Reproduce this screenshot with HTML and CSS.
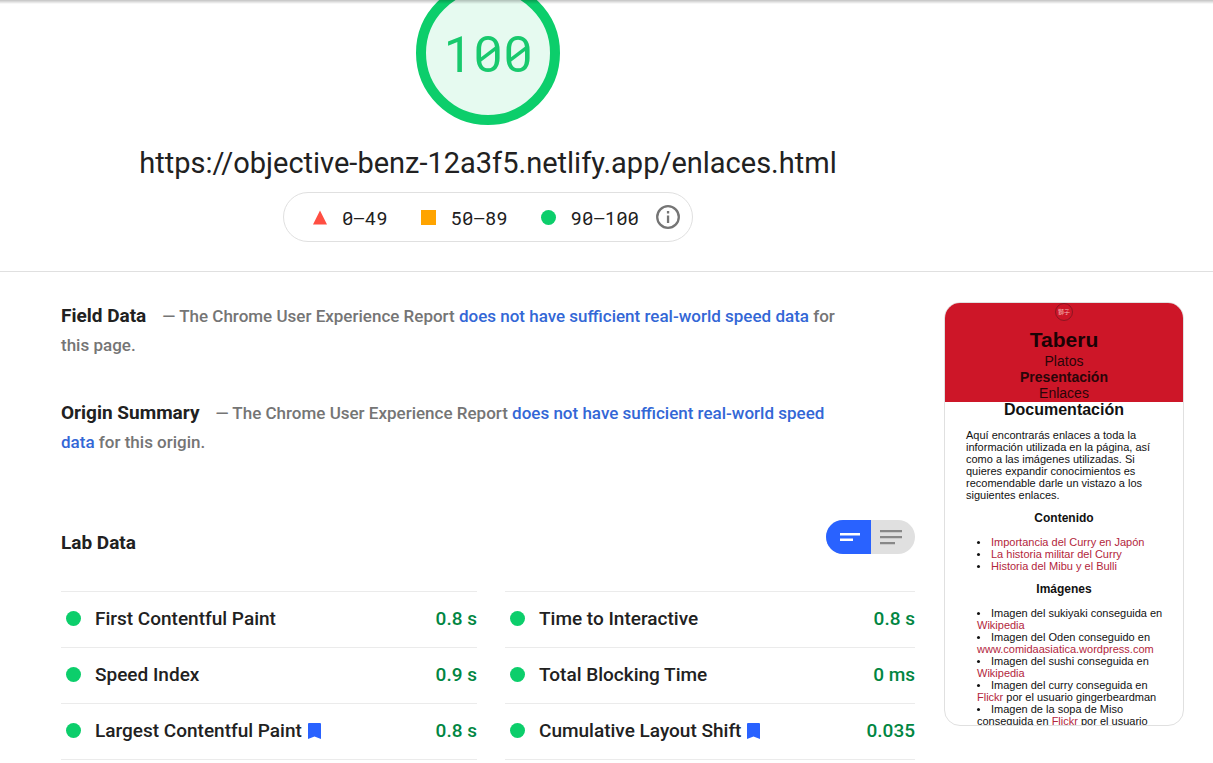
FILE: index.html
```html
<!DOCTYPE html>
<html lang="en">
<head>
<meta charset="utf-8">
<title>PageSpeed Insights</title>
<link rel="stylesheet" href="styles.css">
</head>
<body>
<div class="topshade"></div>
<header class="summary columns">
  <div class="summary-main">
    <div class="gauge">100</div>
    <h1 class="url">https://objective-benz-12a3f5.netlify.app/enlaces.html</h1>
    <div class="legend">
      <span class="range"><svg class="mark" viewBox="0 0 16 16"><path d="M8 1.500 15 15.500H1z" fill="#ff4e42"/></svg>0–49</span>
      <span class="range"><svg class="mark" viewBox="0 0 16 16"><path d="M0 1h15v15H0z" fill="#ffa400"/></svg>50–89</span>
      <span class="range"><svg class="mark" viewBox="0 0 16 16"><circle cx="7.500" cy="8.500" r="7.500" fill="#0cce6b"/></svg>90–100</span>
      <button class="info" type="button" aria-label="Information"><svg viewBox="0 0 24 24" width="24" height="24"><circle cx="12" cy="12" r="10.800" fill="none" stroke="#757575" stroke-width="2.300"/><path d="M10.900 10.500h2.300v7.500h-2.300zM10.900 6h2.300v2.400h-2.300z" fill="#757575"/></svg></button>
    </div>
  </div>
</header>
<main class="columns report">
  <div class="data">
    <section class="block">
      <h2>Field Data</h2>
      <p>— The Chrome User Experience Report <a href="#">does not have sufficient real-world speed data</a> for this page.</p>
    </section>
    <section class="block">
      <h2>Origin Summary</h2>
      <p>— The Chrome User Experience Report <a href="#">does not have sufficient real-world speed data</a> for this origin.</p>
    </section>
    <section>
      <div class="lab-head">
        <h2>Lab Data</h2>
        <div class="toggle">
          <button class="on" type="button" aria-label="Compact view"><svg viewBox="0 0 20 16" width="20" height="16"><path d="M0 4h20v2.500H0zM0 9.500h13V12H0z" fill="#fff"/></svg></button>
          <button type="button" aria-label="Detailed view"><svg viewBox="0 0 22 16" width="22" height="16"><path d="M0 1h22v2.200H0zM0 7h22v2.200H0zM0 13h15v2.200H0z" fill="#888"/></svg></button>
        </div>
      </div>
      <div class="metrics">
        <div class="metric"><i class="dot"></i><span class="name">First Contentful Paint</span><b>0.8 s</b></div>
        <div class="metric"><i class="dot"></i><span class="name">Time to Interactive</span><b>0.8 s</b></div>
        <div class="metric"><i class="dot"></i><span class="name">Speed Index</span><b>0.9 s</b></div>
        <div class="metric"><i class="dot"></i><span class="name">Total Blocking Time</span><b>0 ms</b></div>
        <div class="metric"><i class="dot"></i><span class="name">Largest Contentful Paint<svg class="flag" viewBox="0 0 13 16"><path d="M1 0h11q1 0 1 1v15l-6.500-2.500L0 16V1q0-1 1-1z" fill="#2962ff"/></svg></span><b>0.8 s</b></div>
        <div class="metric"><i class="dot"></i><span class="name">Cumulative Layout Shift<svg class="flag" viewBox="0 0 13 16"><path d="M1 0h11q1 0 1 1v15l-6.500-2.500L0 16V1q0-1 1-1z" fill="#2962ff"/></svg></span><b>0.035</b></div>
      </div>
    </section>
  </div>
  <aside class="shot">
    <div class="shot-head">
      <div class="seal">獅子</div>
      <h3 class="brand">Taberu</h3>
      <div>Platos</div>
      <div><strong>Presentación</strong></div>
      <div>Enlaces</div>
    </div>
    <h3 class="doc">Documentación</h3>
    <p class="intro">Aquí encontrarás enlaces a toda la información utilizada en la página, así como a las imágenes utilizadas. Si quieres expandir conocimientos es recomendable darle un vistazo a los siguientes enlaces.</p>
    <h4>Contenido</h4>
    <ul>
      <li><a href="#">Importancia del Curry en Japón</a></li>
      <li><a href="#">La historia militar del Curry</a></li>
      <li><a href="#">Historia del Mibu y el Bulli</a></li>
    </ul>
    <h4>Imágenes</h4>
    <ul>
      <li>Imagen del sukiyaki conseguida en <a href="#">Wikipedia</a></li>
      <li>Imagen del Oden conseguido en <a href="#">www.comidaasiatica.wordpress.com</a></li>
      <li>Imagen del sushi conseguida en <a href="#">Wikipedia</a></li>
      <li>Imagen del curry conseguida en <a href="#">Flickr</a> por el usuario gingerbeardman</li>
      <li>Imagen de la sopa de Miso conseguida en <a href="#">Flickr</a> por el usuario</li>
    </ul>
  </aside>
</main>
</body>
</html>
```
FILE: styles.css
```css
* { box-sizing: border-box; }
html { overflow: hidden; }
body { margin: 0; background: #fff; color: #212121; font-family: Roboto, sans-serif; }
h1, h2, h3, h4, p, ul { margin: 0; padding: 0; }
a { text-decoration: none; }
button { border: 0; padding: 0; background: none; cursor: pointer; }
svg { display: block; }

.topshade { position: fixed; top: 0; left: 0; right: 0; height: 4px; background: linear-gradient(rgba(0,0,0,.24), rgba(0,0,0,0)); }
.columns { display: grid; grid-template-columns: minmax(0, 1fr) 240px; column-gap: 29px; padding: 0 29px 0 61px; }

.summary { border-bottom: 1px solid #e0e0e0; }
.summary-main { display: flex; flex-direction: column; align-items: center; margin-top: -19px; padding-bottom: 29px; }
.gauge { width: 144px; height: 144px; border: 10px solid #0cce6b; border-radius: 50%; background: #e6faf0; color: #18c96d; display: flex; align-items: center; justify-content: center; font: 50px "Roboto Mono", "Liberation Mono", monospace; }
.url { margin: 18px 0 9px; font-size: 29px; line-height: 40px; font-weight: 400; white-space: nowrap; }
.legend { display: flex; align-items: center; height: 50px; padding: 0 12px 0 28px; border: 1px solid #e0e0e0; border-radius: 25px; font: 19px "Roboto Mono", "Liberation Mono", monospace; }
.range { display: flex; align-items: center; gap: 14px; margin-right: 33px; }
.range:nth-child(3) { margin-right: 17px; }
.mark { width: 16px; height: 16px; }

.report { padding-top: 30px; align-items: start; }
.data { margin-top: -1px; }
h2 { font-size: 19px; line-height: 29px; font-weight: 700; }
.block { margin-bottom: 38px; padding-right: 60px; }
.block h2, .block p { display: inline; }
.block h2 { margin-right: 12px; }
.block p { font-size: 17px; line-height: 29px; font-weight: 500; color: #757575; }
.block a { color: #3367d6; }
.lab-head { display: flex; justify-content: space-between; align-items: flex-start; margin-top: 63px; }
.lab-head h2 { padding-top: 8px; }
.toggle { display: flex; width: 89px; height: 34px; border-radius: 17px; overflow: hidden; background: #e0e0e0; }
.toggle button { flex: 1; display: flex; align-items: center; justify-content: center; padding-left: 4px; }
.toggle button + button { padding: 0 4px 0 0; }
.toggle .on { background: #2962ff; }
.metrics { display: grid; grid-template-columns: 416fr 410fr; column-gap: 28px; margin-top: 34px; }
.metric { display: flex; align-items: center; height: 56px; padding: 0 0 2px 5px; border-top: 1px solid #ebebeb; font-size: 19px; font-weight: 500; }
.metric:nth-last-child(-n+2) { height: 57px; border-bottom: 1px solid #ebebeb; }
.dot { width: 15px; height: 15px; margin-right: 14px; border-radius: 50%; background: #0cce6b; }
.name { flex: 1; display: flex; align-items: center; gap: 6px; }
.flag { width: 13px; height: 16px; }
.metric b { font-weight: 500; color: #018642; }

.shot { height: 424px; border: 1px solid #e0e0e0; border-radius: 16px; overflow: hidden; font: 11px/12px "Liberation Sans", Arial, sans-serif; color: #111; }
.shot a { color: #b3263c; }
.shot-head { background: #cd1628; color: #2a0508; text-align: center; font-size: 14px; line-height: 16px; padding-bottom: 1px; }
.seal { width: 18px; height: 18px; margin: 0 auto; border: 1px solid #8c1522; border-radius: 50%; color: #f3b9b4; font: 6px/16px "Noto Sans CJK JP", sans-serif; }
.brand { padding-top: 6px; font-size: 21px; line-height: 26px; color: #1a0305; }
.doc { font-size: 16px; line-height: 16px; text-align: center; }
.intro { padding: 11px 32px 0 21px; }
.shot h4 { font-size: 12px; line-height: 14px; text-align: center; margin: 10px 0 11px; }
.shot ul { list-style: none; padding: 0 20px 0 32px; }
.shot li::before { content: ""; display: inline-block; width: 3px; height: 3px; margin: 0 11px 2px 0; border-radius: 50%; background: #111; }
```
